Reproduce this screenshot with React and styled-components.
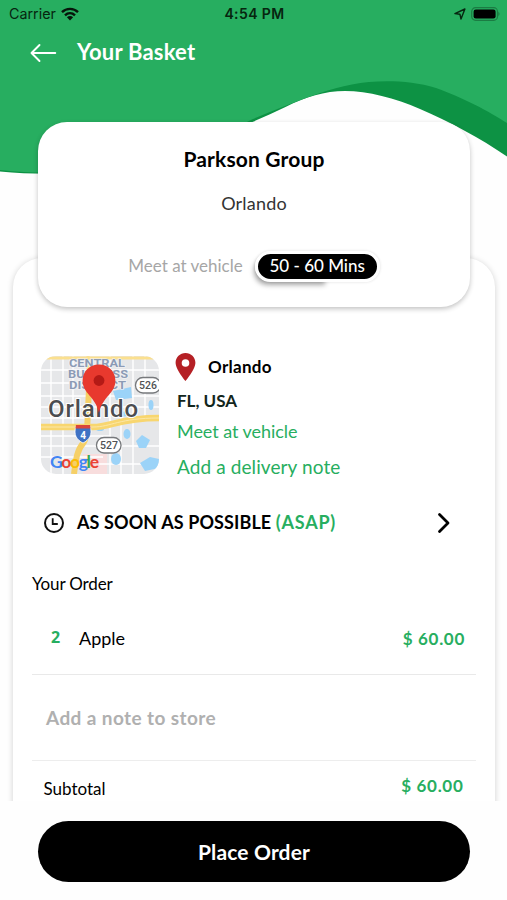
import React from 'react';
import styled, { createGlobalStyle } from 'styled-components';

const GlobalStyle = createGlobalStyle`
  * {
    box-sizing: border-box;
  }
  body {
    margin: 0;
    background: #fff;
  }
`;

const Screen = styled.div`
  position: relative;
  display: flex;
  flex-direction: column;
  width: 507px;
  height: 900px;
  overflow: hidden;
  background: #fefefe;
  color: #000;
  font-family: Lato, 'Open Sans', sans-serif;
`;
const Wave = styled.svg`
  position: absolute;
  top: 0;
  left: 0;
`;
const StatusBar = styled.div`
  position: relative;
  display: grid;
  grid-template-columns: 1fr auto 1fr;
  align-items: center;
  height: 27px;
  padding: 0 7px 0 9px;
  font-family: Inter, sans-serif;
  font-size: 14.3px;
  color: #06250f;
`;
const StatusGroup = styled.div`
  display: flex;
  align-items: center;
  gap: 5px;
  justify-content: ${props => props.$end ? 'flex-end' : 'flex-start'};
`;
const Clock = styled.div`
  font-size: 14px;
  font-weight: 600;
  letter-spacing: 0.4px;
`;
const NavBar = styled.div`
  position: relative;
  display: flex;
  align-items: center;
  gap: 20px;
  height: 51px;
  padding-left: 30px;
  color: #fff;
`;
const Text = styled.span`
  font-size: ${props => props.$size || 17}px;
  font-weight: ${props => props.$weight || 400};
  letter-spacing: ${props => props.$spacing || 0}px;
  color: ${props => props.$color || 'inherit'};
  line-height: 1.2;
  white-space: nowrap;
`;
const StoreCard = styled.div`
  position: relative;
  z-index: 1;
  flex: none;
  display: flex;
  flex-direction: column;
  align-items: center;
  height: 185px;
  margin: 44px 37px 0 38px;
  padding-top: 17px;
  border-radius: 29px;
  background: #fff;
  box-shadow: 0 2px 5px rgba(0, 0, 0, 0.24);
`;
const CardLine = styled.div`
  display: flex;
  align-items: center;
  gap: 12px;
  height: ${props => props.$height}px;
`;
const Pill = styled.div`
  position: relative;
  z-index: 0;
  display: flex;
  align-items: center;
  justify-content: center;
  width: 125px;
  height: 31px;
  border: 3px solid #fff;
  border-radius: 16px;
  background: #000;
  color: #fff;
  box-shadow: 0 0 3px rgba(0, 0, 0, 0.14);
  &::before {
    content: '';
    position: absolute;
    z-index: -2;
    left: -3px;
    top: 0;
    width: 71px;
    height: 27px;
    border-radius: 12px 0 0 14px;
    box-shadow: -1px 4px 5px rgba(0, 0, 0, 0.34);
  }
  &::after {
    content: '';
    position: absolute;
    z-index: -1;
    inset: -3px;
    border: 3px solid #fff;
    border-radius: 16px;
    background: #000;
  }
`;
const Body = styled.div`
  flex: 1;
  min-height: 0;
  margin-top: -59px;
  padding: 10px 12.5px 0 13px;
  overflow: hidden;
`;
const Sheet = styled.div`
  height: 640px;
  padding: 92px 18.5px 0 19px;
  border-radius: 29px;
  background: #fff;
  box-shadow: 0 1px 6px rgba(0, 0, 0, 0.18);
`;
const Address = styled.div`
  display: flex;
  gap: 18px;
  padding-left: 9px;
`;
const MapThumb = styled.svg`
  flex: none;
  margin-top: 6px;
  border-radius: 15px;
`;
const AddressLines = styled.div`
  display: grid;
  grid-template-rows: 34px 34px 27px 44px;
  align-items: center;
`;
const City = styled.div`
  display: flex;
  align-items: center;
  gap: 12px;
  margin-left: -2px;
`;
const Schedule = styled.div`
  display: flex;
  align-items: center;
  height: 68px;
  padding: 0 25.5px 0 11px;
`;
const ScheduleText = styled.div`
  display: flex;
  flex: 1;
  gap: 4.5px;
  margin-left: 12px;
`;
const Heading = styled.div`
  display: flex;
  align-items: center;
  height: 54px;
`;
const Item = styled.div`
  display: grid;
  grid-template-columns: 28px 1fr auto;
  align-items: center;
  height: 64px;
  padding: 0 11px 7px 19px;
  border-bottom: 1px solid #e9e9e9;
`;
const Quantity = styled(Text)`
  margin-top: -3px;
  font-family: 'Open Sans', sans-serif;
`;
const NoteField = styled.div`
  display: flex;
  align-items: center;
  height: 86px;
  padding: 1px 0 0 14px;
  border-bottom: 1px solid #ededed;
`;
const Total = styled.div`
  display: flex;
  align-items: center;
  justify-content: space-between;
  height: 56px;
  padding: 0 12.5px 0 11.5px;
`;
const Price = styled(Text)`
  margin-top: ${props => props.$shift || 0}px;
`;
const Footer = styled.div`
  flex: none;
  height: 99px;
  padding: 20px 37px 0 38px;
  background: #fefefe;
`;
const OrderButton = styled.button`
  display: flex;
  align-items: center;
  justify-content: center;
  width: 100%;
  height: 61px;
  padding: 0;
  border: none;
  border-radius: 31px;
  background: #000;
  color: #fff;
  font-family: inherit;
`;

const green = '#27ae60';

const HeaderWave = () => (
    <Wave width="507" height="180" viewBox="0 0 507 180">
        <path fill="#0d9244" d="M0 0H507V156.5C480 138 450 122 420 109C395 98 368 91 345 91C325 91 305 97 286 106.7C275 112 264 117 253 121.7C190 154 110 182 0 171.5Z" />
        <path fill={green} d="M0 0H507V123C490 112 462 97 436 88C420 83 403 81.3 387 81.3C362 81.3 341 86 320 93C297 101 274 110 253 119C190 150 110 182 0 170Z" />
    </Wave>
);

const Wifi = () => (
    <svg width="18" height="14" viewBox="0 0 18 14" fill="none" stroke="#06150a" strokeWidth="2.4">
        <path d="M1 5.2C5.4.8 12.6.8 17 5.2" />
        <path d="M4 8.3C6.9 5.5 11.1 5.5 14 8.3" />
        <path d="M9 13.4L5.9 10.3C7.7 8.6 10.3 8.6 12.1 10.3Z" fill="#06150a" stroke="none" />
    </svg>
);

const Location = () => (
    <svg width="12" height="12" viewBox="0 0 12 12" fill="none" stroke="#06250f" strokeWidth="1.4" strokeLinejoin="round">
        <path d="M.9 5.6L10.9 1L7 11L5.9 6.2Z" />
    </svg>
);

const Battery = () => (
    <svg width="29" height="14" viewBox="0 0 29 14">
        <rect x=".7" y=".7" width="25.8" height="12.6" rx="3.8" fill="none" stroke="#1b7c43" strokeWidth="1.2" />
        <rect x="2.6" y="2.5" width="22" height="9" rx="2.2" fill="#000" />
        <path d="M27.3 4.8Q29.8 7 27.3 9.2Z" fill="#1b7c43" />
    </svg>
);

const Back = () => (
    <svg width="27" height="20" viewBox="0 0 27 20" fill="none" stroke="#fff" strokeWidth="1.9" strokeLinecap="round" strokeLinejoin="round">
        <path d="M25.3 10H1.5M9.5 2L1.5 10L9.5 18" />
    </svg>
);

const Pin = () => (
    <svg width="21" height="30" viewBox="0 0 21 30">
        <path fill="#b52025" fillRule="evenodd" d="M10.5 1C5 1 .6 5.3.6 10.7C.6 17.5 10.5 29 10.5 29S20.4 17.5 20.4 10.7C20.4 5.3 16 1 10.5 1ZM10.5 7.2A3.8 3.8 0 1 1 10.5 14.8A3.8 3.8 0 1 1 10.5 7.2Z" />
    </svg>
);

const TimeIcon = () => (
    <svg width="22" height="22" viewBox="0 0 22 22" fill="none" stroke="#111" strokeWidth="2">
        <circle cx="11" cy="11" r="9" />
        <path d="M9.7 6.2V12H14.8" strokeWidth="1.8" />
    </svg>
);

const Chevron = () => (
    <svg width="14" height="22" viewBox="0 0 14 22" fill="none" stroke="#000" strokeWidth="2.8" strokeLinecap="round" strokeLinejoin="round">
        <path d="M2.5 2.4L11 11L2.5 19.6" />
    </svg>
);

const Map = () => (
    <MapThumb width="118" height="118" viewBox="0 0 118 118" fontFamily="Roboto, sans-serif">
        <rect width="118" height="118" fill="#e6e7e9" />
        <rect x="28" y="0" width="40" height="34" fill="#ecebed" />
        <path fill="#f8dddd" d="M42 98H66V118H42Z" />
        <path
            stroke="#fff"
            strokeWidth="1.4"
            fill="none"
            d="M10 0V118M22 0V118M32 0V70M69 0V118M80 44V118M92 0V118M104 0V64M0 14H118M0 27H70M0 40H118M0 51H118M0 62H60M0 80H70M0 90H118M0 101H62M58 108H118"
        />
        <g fill="#9bd3f8">
            <path d="M72 35L90 31L91 42L75 44Z" />
            <ellipse cx="110" cy="49" rx="2.5" ry="5" />
            <ellipse cx="86" cy="78" rx="3.5" ry="5" />
            <path d="M95 85L101 79L109 84L105 92L98 92Z" />
            <ellipse cx="75" cy="103" rx="5" ry="6" />
            <path d="M99 107L109 101L118 103V112L104 115Z" />
            <ellipse cx="59" cy="73" rx="4" ry="2" />
            <ellipse cx="83" cy="58" rx="4" ry="2.5" />
        </g>
        <path stroke="#fbe08f" strokeWidth="3" fill="none" d="M0 2H118M47 0V60" />
        <path stroke="#f6d067" strokeWidth="6" fill="none" d="M33 118C35 102 36 94 43 86C47 79 46 68 48 34" />
        <path stroke="#f8d66f" strokeWidth="6.5" fill="none" d="M0 71H52C70 71 78 62 118 62" />
        <path stroke="#fbe7a8" strokeWidth="1" fill="none" d="M0 71H52C70 71 78 62 118 62" />
        <g fill="#8c9bb5" stroke="#f4f4f6" strokeWidth="1.2" paintOrder="stroke" fontSize="10" fontWeight="700">
            <text x="28" y="10.5" textLength="56" lengthAdjust="spacingAndGlyphs">CENTRAL</text>
            <text x="27" y="21.8" textLength="60" lengthAdjust="spacingAndGlyphs">BUSINESS</text>
            <text x="28" y="33" textLength="57" lengthAdjust="spacingAndGlyphs">DISTRICT</text>
        </g>
        <text x="7" y="61" textLength="90" fontSize="24" fontWeight="500" fill="#4b4d50" stroke="#fff" strokeWidth="2" paintOrder="stroke">Orlando</text>
        <g fill="#fff" stroke="#77797c" strokeWidth="1.3">
            <rect x="94.5" y="21.5" width="25" height="15.5" rx="7.5" />
            <rect x="55.5" y="81.5" width="24.5" height="15.5" rx="7.5" />
        </g>
        <g fill="#505255" fontSize="10.5" fontWeight="500">
            <text x="98" y="33">526</text>
            <text x="59" y="93">527</text>
        </g>
        <path fill="#3f72c4" stroke="#fff" strokeWidth=".8" d="M35 70H49C52 79 48 84 42 87C36 84 32 79 35 70Z" />
        <path fill="#d9453b" d="M35 69H49L49.6 72.5H34.4Z" />
        <text x="39.3" y="83" fontSize="10" fontWeight="700" fill="#fff">4</text>
        <path fill="#e8392e" d="M58 8.5C48.5 8.5 41.6 15.8 41.6 24.5C41.6 38 54.5 40 58 57C61.5 40 74.4 38 74.4 24.5C74.4 15.8 67.5 8.5 58 8.5Z" />
        <circle cx="58" cy="24.5" r="5.4" fill="#b41a16" />
        <text x="9" y="112" textLength="49" fontFamily="Lato, sans-serif" fontSize="17.5" fontWeight="700">
            <tspan fill="#4285f4">G</tspan>
            <tspan fill="#ea4335">o</tspan>
            <tspan fill="#fbbc05">o</tspan>
            <tspan fill="#4285f4">g</tspan>
            <tspan fill="#34a853">l</tspan>
            <tspan fill="#ea4335">e</tspan>
        </text>
    </MapThumb>
);

const App = () => {
    return (
        <Screen>
            <GlobalStyle />
            <HeaderWave />
            <StatusBar>
                <StatusGroup>
                    Carrier
                    <Wifi />
                </StatusGroup>
                <Clock>4:54 PM</Clock>
                <StatusGroup $end>
                    <Location />
                    <Battery />
                </StatusGroup>
            </StatusBar>
            <NavBar>
                <Back />
                <Text $size={22} $weight={700} $spacing={0.2}>Your Basket</Text>
            </NavBar>
            <StoreCard>
                <CardLine $height={40}>
                    <Text $size={21} $weight={700} $spacing={0.15}>Parkson Group</Text>
                </CardLine>
                <CardLine $height={49}>
                    <Text $size={18} $spacing={0.2} $color="#333">Orlando</Text>
                </CardLine>
                <CardLine $height={76}>
                    <Text $color="#a6a6a6">Meet at vehicle</Text>
                    <Pill>
                        <Text $weight={500}>50 - 60 Mins</Text>
                    </Pill>
                </CardLine>
            </StoreCard>
            <Body>
                <Sheet>
                    <Address>
                        <Map />
                        <AddressLines>
                            <City>
                                <Pin />
                                <Text $weight={700} $spacing={0.3}>Orlando</Text>
                            </City>
                            <Text $weight={700} $color="#12261c">FL, USA</Text>
                            <Text $size={18} $spacing={-0.05} $color={green}>Meet at vehicle</Text>
                            <Text $size={19} $spacing={0.1} $color={green}>Add a delivery note</Text>
                        </AddressLines>
                    </Address>
                    <Schedule>
                        <TimeIcon />
                        <ScheduleText>
                            <Text $size={18} $weight={700} $spacing={0.1}>AS SOON AS POSSIBLE</Text>
                            <Text $size={18} $weight={700} $spacing={0.75} $color={green}>(ASAP)</Text>
                        </ScheduleText>
                        <Chevron />
                    </Schedule>
                    <Heading>
                        <Text $spacing={-0.15}>Your Order</Text>
                    </Heading>
                    <Item>
                        <Quantity $size={16} $weight={700} $color={green}>2</Quantity>
                        <Text $size={18}>Apple</Text>
                        <Price $weight={700} $spacing={0.7} $color={green}>$ 60.00</Price>
                    </Item>
                    <NoteField>
                        <Text $size={19} $weight={700} $spacing={0.4} $color="#b0b0b0">Add a note to store</Text>
                    </NoteField>
                    <Total>
                        <Text>Subtotal</Text>
                        <Price $weight={700} $spacing={0.7} $shift={-5} $color={green}>$ 60.00</Price>
                    </Total>
                </Sheet>
            </Body>
            <Footer>
                <OrderButton>
                    <Text $size={21} $weight={700} $spacing={0.15}>Place Order</Text>
                </OrderButton>
            </Footer>
        </Screen>
    );
};

export default App;
